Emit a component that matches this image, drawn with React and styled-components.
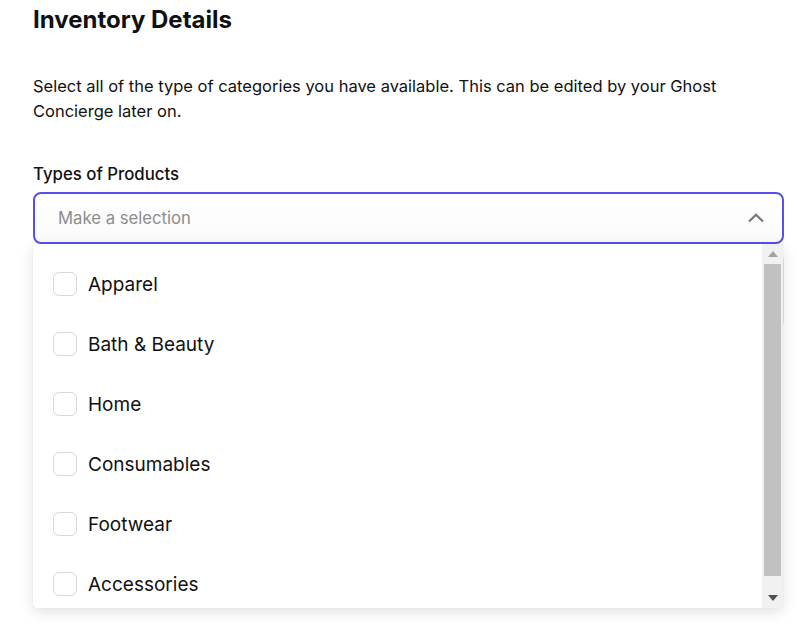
import React from 'react';
import styled, { createGlobalStyle } from 'styled-components';

const GlobalStyle = createGlobalStyle`
  body {
    margin: 0;
    background: #fff;
    font-family: Inter, "Noto Sans", sans-serif;
    color: #111;
  }
`

const Page = styled.div`
  width: 797px;
  height: 627px;
  overflow: hidden;
  padding: 0 13px 0 33px;
  box-sizing: border-box;
`

const Title = styled.h1`
  margin: 0;
  padding-top: 5px;
  font-size: 24px;
  font-weight: 700;
  line-height: 30px;
  letter-spacing: 0;
`

const Intro = styled.p`
  margin: 39px 0 0;
  font-size: 16.5px;
  line-height: 25px;
  width: 700px;
`

const Label = styled.div`
  margin-top: 38px;
  font-size: 16.8px;
  font-weight: 500;
  line-height: 24px;
`

const Field = styled.div`
  position: relative;
  margin-top: 6px;
`

const SelectBox = styled.div`
  height: 52px;
  box-sizing: border-box;
  border: 2px solid #5850ec;
  border-radius: 8px;
  display: flex;
  align-items: center;
  justify-content: space-between;
  padding: 0 17px 0 23px;
  background: linear-gradient(#fff, #fafafa);
`

const Placeholder = styled.span`
  font-size: 16.7px;
  color: #8d8d8d;
`

const Behind = styled.div`
  margin-top: 9px;
  height: 74px;
  border: 1px solid #e4e4ea;
  border-radius: 8px;
`

const Menu = styled.div`
  position: absolute;
  top: 52px;
  left: 0;
  right: 1px;
  height: 364px;
  display: flex;
  background: #fff;
  border-radius: 0 0 4px 4px;
  box-shadow: 0 4px 14px rgba(0, 0, 0, 0.12), 0 0 1px rgba(0, 0, 0, 0.15);
  overflow: hidden;
`

const List = styled.ul`
  flex: 1;
  list-style: none;
  margin: 0;
  padding: 10px 0 0 20px;
`

const Item = styled.li`
  height: 60px;
  display: flex;
  align-items: center;
  gap: 11px;
  font-size: 19px;
  color: #111;
`

const Box = styled.span`
  width: 24px;
  height: 24px;
  box-sizing: border-box;
  border: 1.5px solid #d8d8de;
  border-radius: 6px;
  background: #fff;
`

const Scrollbar = styled.div`
  width: 21px;
  background: #f1f1f1;
  display: flex;
  flex-direction: column;
  align-items: center;
`

const Arrow = styled.div`
  height: 20px;
  display: flex;
  align-items: center;
  justify-content: center;
`

const Thumb = styled.div`
  width: 17px;
  flex: 1;
  background: #c1c1c1;
  margin-bottom: 12px;
`

const items = ['Apparel', 'Bath & Beauty', 'Home', 'Consumables', 'Footwear', 'Accessories'];

const App = () => (
  <>
    <GlobalStyle />
    <Page>
      <Title>Inventory Details</Title>
      <Intro>
        Select all of the type of categories you have available. This can be edited by your Ghost Concierge later on.
      </Intro>
      <Label>Types of Products</Label>
      <Field>
        <SelectBox>
          <Placeholder>Make a selection</Placeholder>
          <svg width="18" height="12" viewBox="0 0 18 12">
            <path d="M2 9.5 L9 2.8 L16 9.5" fill="none" stroke="#777" strokeWidth="2.2" />
          </svg>
        </SelectBox>
        <Behind />
        <Menu>
          <List>
            {items.map(name => (
              <Item key={name}>
                <Box />
                {name}
              </Item>
            ))}
          </List>
          <Scrollbar>
            <Arrow>
              <svg width="10" height="6" viewBox="0 0 10 6"><path d="M0 6 L5 0 L10 6 Z" fill="#a3a3a3" /></svg>
            </Arrow>
            <Thumb />
            <Arrow>
              <svg width="10" height="6" viewBox="0 0 10 6"><path d="M0 0 L10 0 L5 6 Z" fill="#505050" /></svg>
            </Arrow>
          </Scrollbar>
        </Menu>
      </Field>
    </Page>
  </>
)

export default App;
